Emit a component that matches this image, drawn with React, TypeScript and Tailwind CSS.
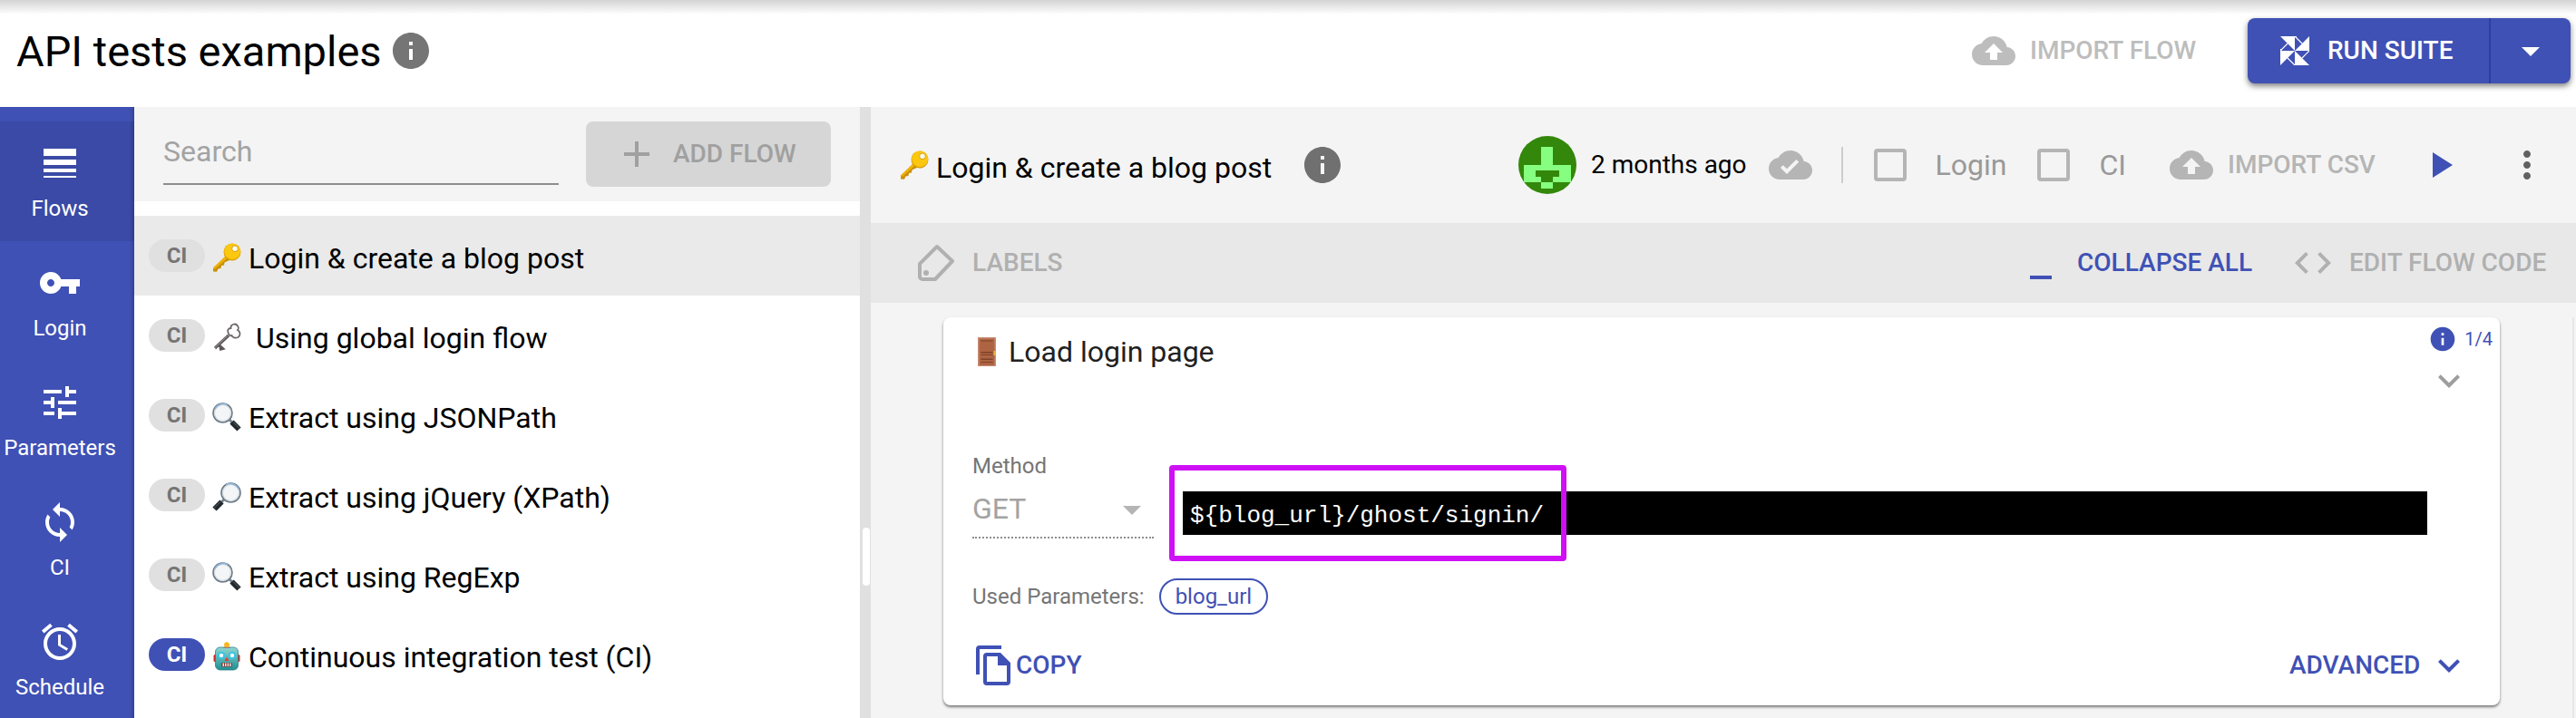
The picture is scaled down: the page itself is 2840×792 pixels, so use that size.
import type { ReactNode } from "react";

type IconProps = { d: string; className?: string };

function Icon({ d, className = "size-12" }: IconProps) {
  return (
    <svg viewBox="0 0 24 24" className={`shrink-0 fill-current ${className}`} aria-hidden="true">
      <path d={d} />
    </svg>
  );
}

const ICONS = {
  info: "M12 2C6.48 2 2 6.48 2 12s4.480 10 10 10 10-4.480 10-10S17.520 2 12 2zm1 15h-2v-6h2v6zm0-8h-2V7h2v2z",
  cloudUp: "M19.350 10.040C18.670 6.590 15.640 4 12 4 9.110 4 6.600 5.640 5.350 8.040 2.340 8.360 0 10.910 0 14c0 3.310 2.690 6 6 6h13c2.760 0 5-2.240 5-5 0-2.640-2.050-4.780-4.650-4.960zM14 13v4h-4v-4H7l5-5 5 5h-3z",
  cloudDone: "M19.350 10.040C18.670 6.590 15.640 4 12 4 9.110 4 6.600 5.640 5.350 8.040 2.340 8.360 0 10.910 0 14c0 3.310 2.690 6 6 6h13c2.760 0 5-2.240 5-5 0-2.640-2.050-4.780-4.650-4.960zM10 17l-3.500-3.500 1.410-1.410L10 14.170 15.180 9l1.410 1.410L10 17z",
  flows: "M3 17h18v-2H3v2zm0 3h18v-1H3v1zm0-7h18v-3H3v3zm0-9v4h18V4H3z",
  key: "M12.650 10C11.830 7.670 9.610 6 7 6c-3.310 0-6 2.690-6 6s2.690 6 6 6c2.610 0 4.830-1.670 5.650-4H17v4h4v-4h2v-4H12.650zM7 14c-1.100 0-2-.9-2-2s.9-2 2-2 2 .9 2 2-.9 2-2 2z",
  tune: "M3 17v2h6v-2H3zM3 5v2h10V5H3zm10 16v-2h8v-2h-8v-2h-2v6h2zM7 9v2H3v2h4v2h2V9H7zm14 4v-2H11v2h10zm-6-4h2V7h4V5h-4V3h-2v6z",
  sync: "M12 4V1L8 5l4 4V6c3.310 0 6 2.690 6 6 0 1.010-.25 1.970-.7 2.800l1.460 1.460C19.540 15.030 20 13.570 20 12c0-4.420-3.580-8-8-8zm0 14c-3.310 0-6-2.690-6-6 0-1.010.25-1.970.7-2.800L5.240 7.740C4.460 8.970 4 10.430 4 12c0 4.420 3.580 8 8 8v3l4-4-4-4v3z",
  alarm: "M22 5.720l-4.600-3.860-1.290 1.530 4.600 3.860L22 5.720zM7.880 3.390L6.600 1.860 2 5.710l1.290 1.530 4.590-3.850zM12.500 8H11v6l4.750 2.850.75-1.230-4-2.370V8zM12 4c-4.970 0-9 4.030-9 9s4.020 9 9 9c4.970 0 9-4.030 9-9s-4.030-9-9-9zm0 16c-3.870 0-7-3.130-7-7s3.130-7 7-7 7 3.130 7 7-3.130 7-7 7z",
  plus: "M19 13h-6v6h-2v-6H5v-2h6V5h2v6h6v2z",
  play: "M8 5v14l11-7z",
  more: "M12 8c1.100 0 2-.9 2-2s-.9-2-2-2-2 .9-2 2 .9 2 2 2zm0 2c-1.100 0-2 .9-2 2s.9 2 2 2 2-.9 2-2-.9-2-2-2zm0 6c-1.100 0-2 .9-2 2s.9 2 2 2 2-.9 2-2-.9-2-2-2z",
  code: "M9.400 16.600L4.800 12l4.600-4.600L8 6l-6 6 6 6 1.400-1.400zm5.200 0l4.600-4.600-4.600-4.600L16 6l6 6-6 6-1.400-1.400z",
  minimize: "M6 19h12v2H6z",
  down: "M7 10l5 5 5-5z",
  chevron: "M7.410 8.590L12 13.170l4.590-4.580L18 10l-6 6-6-6 1.410-1.410z",
};

function KeyEmoji({ silver = false }: { silver?: boolean }) {
  if (silver) {
    return (
      <svg viewBox="0 0 32 32" className="size-8 shrink-0" aria-hidden="true">
        <path d="M18 14 3 28M7.500 25l4 3.500-3.500 1" fill="none" stroke="#5c5557" strokeWidth="3.200" />
        <path d="M17 14.500 3 27.500" stroke="#a39d9f" strokeWidth="1" />
        <path d="M18 12c-2-4 0-6 2.500-6C20 1.500 26 0 28 3.500c1.500 2 .5 4 0 4.500 3 1.500 3.500 6 .5 8-3 1.600-6.500 0-7-2-1.500.7-2.700 0-3.500-2z" fill="none" stroke="#6f686b" strokeWidth="1.800" />
      </svg>
    );
  }
  return (
    <svg viewBox="0 0 32 32" className="size-8 shrink-0" aria-hidden="true">
      <path d="M17 13 1 27.500 1 31.500l4 .3 1.500-3.300 3-.5.500-3 3-.5.500-3L21 18z" fill="#c98f06" />
      <path d="M17 12 1 27.500l1.200 1.800L20 14z" fill="#eeb20c" />
      <circle cx="22" cy="10" r="9.500" fill="#d99e05" />
      <circle cx="22.200" cy="9.300" r="8.900" fill="#fcc80f" />
      <circle cx="25" cy="6.300" r="3.300" fill="#fffbea" stroke="#c98f06" strokeWidth=".8" />
    </svg>
  );
}

function LensEmoji({ right = false }: { right?: boolean }) {
  return (
    <svg viewBox="0 0 32 32" className={right ? "size-8 shrink-0 -scale-x-100" : "size-8 shrink-0"} aria-hidden="true">
      <path d="m19 19 4 4" stroke="#7d858c" strokeWidth="3" />
      <path d="m21.500 21.500 8 8" stroke="#22282c" strokeWidth="6" />
      <path d="m23 21.500 7 7" stroke="#5d666c" strokeWidth="1" />
      <circle cx="11.500" cy="11.500" r="10.500" fill="#f3f5f6" stroke="#6c7a86" strokeWidth="1.600" />
      <circle cx="11.500" cy="11.500" r="9" fill="none" stroke="#c9d3db" strokeWidth="1" />
      <path d="M3 7a10.300 10.300 0 0 1 14-4.300" fill="none" stroke="#8fb4d8" strokeWidth="1.600" />
    </svg>
  );
}

function RobotEmoji() {
  return (
    <svg viewBox="0 0 32 32" className="size-8 shrink-0" aria-hidden="true">
      <defs>
        <linearGradient id="robot" x1="0" y1="0" x2="0" y2="1">
          <stop offset="0" stopColor="#8fd6d3" />
          <stop offset="1" stopColor="#1f8f92" />
        </linearGradient>
      </defs>
      <rect x="1.500" y="14" width="29" height="8" rx="1.500" fill="#d5262b" />
      <rect x="3.500" y="6" width="25" height="25" rx="5" fill="url(#robot)" stroke="#2c7f80" strokeWidth=".8" />
      <path d="M12 6.500q4-3 8 0z" fill="#b9463a" />
      <circle cx="16" cy="3.200" r="2.900" fill="#f9b51b" />
      <circle cx="10" cy="15" r="4" fill="#35c5e6" />
      <circle cx="22" cy="15" r="4" fill="#35c5e6" />
      <circle cx="10" cy="15" r="2.200" fill="#fff" />
      <circle cx="22" cy="15" r="2.200" fill="#fff" />
      <path d="m16 16.500 2.300 4.500h-4.600z" fill="#e23b32" />
      <rect x="10" y="23" width="12" height="4.500" rx="1" fill="#7c3d38" />
      <path d="M12.200 23.500v3.500M14.800 23.500v3.500M17.400 23.500v3.500M20 23.500v3.500" stroke="#fff" strokeWidth="1.300" />
    </svg>
  );
}

function DoorEmoji() {
  return (
    <svg viewBox="0 0 32 32" className="size-8 shrink-0" aria-hidden="true">
      <path d="M6 0h20v32H6z" fill="#c98d76" />
      <path d="M7.500 1.500h17V31h-17z" fill="#ae6443" />
      <path d="M9.500 3.500h13v1h-13zM9.500 16h13v1.500h-13zM9.500 19h13v1h-13zM9.500 23.500h13V25h-13zM9.500 27h13v1h-13z" fill="#7e4229" />
      <rect x="23.500" y="15" width="2" height="5" fill="#e5bd3d" />
    </svg>
  );
}

const NAV = [
  { label: "Flows", icon: ICONS.flows, active: true },
  { label: "Login", icon: ICONS.key },
  { label: "Parameters", icon: ICONS.tune },
  { label: "CI", icon: ICONS.sync },
  { label: "Schedule", icon: ICONS.alarm },
];

const FLOWS: { name: string; emoji: ReactNode; selected?: boolean; ci?: boolean; wide?: boolean }[] = [
  { name: "Login & create a blog post", emoji: <KeyEmoji />, selected: true },
  { name: "Using global login flow", emoji: <KeyEmoji silver />, wide: true },
  { name: "Extract using JSONPath", emoji: <LensEmoji /> },
  { name: "Extract using jQuery (XPath)", emoji: <LensEmoji right /> },
  { name: "Extract using RegExp", emoji: <LensEmoji /> },
  { name: "Continuous integration test (CI)", emoji: <RobotEmoji />, ci: true },
];

function TopBar() {
  return (
    <header className="flex h-[118px] items-start justify-between bg-linear-to-b from-[#d4d4d4] to-white to-[16px] pr-1.5 pl-[18px]">
      <div className="flex h-28 items-center gap-2">
        <h1 className="text-[47px] leading-none">API tests examples</h1>
        <button type="button" aria-label="Suite details" className="text-[#757575]">
          <Icon d={ICONS.info} />
        </button>
      </div>
      <div className="flex h-28 items-center">
        <button type="button" className="mr-12 flex w-[256px] items-center gap-4 text-[28px] font-medium text-[#bdbdbd]">
          <Icon d={ICONS.cloudUp} />
          IMPORT FLOW
        </button>
        <div className="flex h-[72px] overflow-hidden rounded-lg bg-[#3f51b5] text-white shadow-[0_3px_6px_rgba(0,0,0,0.5)]">
          <button type="button" className="flex w-[268px] items-center gap-5 border-r-2 border-[#303f9f] pl-9 text-[28px] font-medium">
            <svg viewBox="0 0 32 32" className="size-8 shrink-0" aria-hidden="true">
              <path d="M0 0h16v16zM32 0v16H16zM32 32H16V16zM0 32V16h16z" fill="#fff" />
              <path d="M0 16 8 8M16 0l8 8M32 16l-8 8M16 32l-8-8M.5 16V14M18 .5h-2" fill="none" stroke="#fff" strokeWidth="1.200" />
            </svg>
            RUN SUITE
          </button>
          <button type="button" aria-label="Run options" className="flex w-[88px] items-center justify-center">
            <Icon d={ICONS.down} />
          </button>
        </div>
      </div>
    </header>
  );
}

function SideNav() {
  return (
    <nav className="w-[148px] shrink-0 bg-[#3f51b5] pt-4 text-white shadow-[inset_-4px_0_4px_-2px_rgba(0,0,0,0.2)]">
      {NAV.map((item) => (
        <a
          key={item.label}
          href={`#${item.label.toLowerCase()}`}
          className={`flex h-[132px] flex-col items-center gap-1.5 pt-[22px] pr-4 text-[24px] leading-[40px] ${item.active ? "bg-black/8" : ""}`}
        >
          <Icon d={item.icon} />
          <span>{item.label}</span>
        </a>
      ))}
    </nav>
  );
}

function FlowList() {
  return (
    <aside className="w-[800px] shrink-0 bg-white">
      <div className="flex h-[104px] items-center gap-[30px] bg-[#f4f4f4] px-8">
        <input
          type="text"
          aria-label="Search flows"
          placeholder="Search"
          className="h-[68px] min-w-0 flex-1 border-b-2 border-[#8e8e8e] bg-transparent pb-1 text-[32px] outline-none placeholder:text-[#a3a3a3]"
        />
        <button type="button" className="flex h-[72px] w-[270px] items-center gap-4 rounded-lg bg-[#d6d6d6] pl-8 text-[28px] font-medium text-[#a0a0a0]">
          <Icon d={ICONS.plus} />
          ADD FLOW
        </button>
      </div>
      <ul className="pt-4">
        {FLOWS.map((flow) => (
          <li key={flow.name} className={`flex h-[88px] items-center pl-4 ${flow.selected ? "bg-[#eaeaea]" : ""}`}>
            <span className={`flex h-9 w-[62px] items-center justify-center rounded-full text-[24px] font-bold ${flow.ci ? "bg-[#3f51b5] text-white" : "bg-[#e0e0e0] text-[#757575]"}`}>
              CI
            </span>
            <a href="#flow" className={`flex items-center pt-1 pl-2 text-[32px] leading-10 ${flow.wide ? "gap-4" : "gap-2"}`}>
              {flow.emoji}
              <span className="pt-0.5">{flow.name}</span>
            </a>
          </li>
        ))}
      </ul>
    </aside>
  );
}

function CheckField({ id, label }: { id: string; label: string }) {
  return (
    <div className="flex items-center gap-8">
      <input id={id} type="checkbox" className="size-9 appearance-none rounded-sm border-4 border-[#b5b5b5]" />
      <label htmlFor={id} className="text-[32px] text-[#999999]">
        {label}
      </label>
    </div>
  );
}

function FlowHeader() {
  return (
    <div className="flex h-32 items-center justify-between bg-[#f4f4f4] pr-[30px] pl-8">
      <div className="flex items-center">
        <KeyEmoji />
        <h2 className="pt-1.5 pl-2 text-[32px] leading-10">Login &amp; create a blog post</h2>
        <button type="button" aria-label="Flow details" className="ml-8 text-[#707070]">
          <Icon d={ICONS.info} />
        </button>
      </div>
      <div className="flex items-center">
        <svg viewBox="0 0 64 64" className="size-16 shrink-0" aria-hidden="true">
          <circle cx="32" cy="32" r="32" fill="#33870a" />
          <path d="M25 12h13v20h20v19H6V32h19z" fill="#86ff80" />
          <path d="M19 38h26v7h-7v6H25v-6h-6z" fill="#33870a" />
          <path d="M25 51h13v7H25z" fill="#86ff80" />
        </svg>
        <span className="pl-4 text-[28px]">2 months ago</span>
        <span className="ml-6 text-[#b5b5b5]">
          <Icon d={ICONS.cloudDone} />
        </span>
        <span className="mr-[34px] ml-8 h-10 w-0.5 bg-[#cccccc]" />
        <CheckField id="login-flow" label="Login" />
        <span className="w-[34px]" />
        <CheckField id="ci-flow" label="CI" />
        <button type="button" className="ml-12 flex w-[234px] items-center gap-4 text-[28px] font-medium text-[#b5b5b5]">
          <Icon d={ICONS.cloudUp} />
          IMPORT CSV
        </button>
        <button type="button" aria-label="Run flow" className="ml-10 text-[#3f51b5]">
          <Icon d={ICONS.play} />
        </button>
        <button type="button" aria-label="More actions" className="ml-12 text-[#616161]">
          <Icon d={ICONS.more} />
        </button>
      </div>
    </div>
  );
}

function FlowToolbar() {
  return (
    <div className="flex h-[88px] items-center justify-between bg-[#e8e8e8] pr-[22px] pl-12 text-[28px] font-medium text-[#b0b0b0]">
      <button type="button" className="flex items-center gap-4">
        <svg viewBox="0 0 48 48" className="size-12 shrink-0" fill="none" stroke="currentColor" strokeWidth="4" aria-hidden="true">
          <path d="M6 25 25 6 42 22 23 42H9a3 3 0 0 1-3-3z" strokeLinejoin="round" />
          <circle cx="13" cy="35" r="3" fill="currentColor" stroke="none" />
        </svg>
        LABELS
      </button>
      <div className="flex items-center gap-8">
        <button type="button" className="flex w-[268px] items-center gap-4 text-[#3f51b5]">
          <Icon d={ICONS.minimize} />
          COLLAPSE ALL
        </button>
        <button type="button" className="flex w-[292px] items-center gap-4">
          <Icon d={ICONS.code} />
          EDIT FLOW CODE
        </button>
      </div>
    </div>
  );
}

function StepCard() {
  return (
    <article className="relative mx-20 h-[428px] rounded-lg bg-white px-8 shadow-[0_2px_3px_rgba(0,0,0,0.5)]">
      <div className="flex h-[76px] items-center gap-2">
        <DoorEmoji />
        <h3 className="text-[32px] text-[#212121]">Load login page</h3>
      </div>
      <div className="absolute top-2 right-2 flex items-center gap-2 text-[20px] leading-7 text-[#3f51b5]">
        <Icon d={ICONS.info} className="size-8" />
        1/4
      </div>
      <button type="button" aria-label="Toggle step" className="absolute top-[46px] right-8 text-[#9e9e9e]">
        <Icon d={ICONS.chevron} />
      </button>
      <div className="mt-[68px] flex items-start gap-8 pr-12">
        <div className="w-[200px] shrink-0">
          <label htmlFor="method" className="block text-[24px] leading-10 text-[#757575]">
            Method
          </label>
          <div className="relative h-[60px] border-b-2 border-dotted border-[#8e8e8e] text-[#a3a3a3]">
            <select id="method" className="h-[54px] w-full appearance-none bg-transparent text-[32px] opacity-100">
              <option>GET</option>
            </select>
            <span className="pointer-events-none absolute top-1 right-0 text-[#b5b5b5]">
              <Icon d={ICONS.down} />
            </span>
          </div>
        </div>
        <div className="relative mt-12 flex-1">
          <input
            type="text"
            aria-label="Request URL"
            defaultValue="${blog_url}/ghost/signin/"
            className="block h-12 w-full bg-black px-2 pt-1.5 font-['Courier_New','Liberation_Mono',monospace] text-[26px] text-white outline-none"
          />
          <span className="pointer-events-none absolute -top-[29px] -left-[15px] h-[106px] w-[438px] rounded-sm border-6 border-[#cf10f5]" />
        </div>
      </div>
      <div className="mt-[44px] flex h-10 items-center gap-4 text-[24px] text-[#757575]">
        <span>Used Parameters:</span>
        <a href="#blog_url" className="flex h-10 items-center rounded-full border-2 border-[#3f51b5] px-4 text-[#3f51b5]">
          blog_url
        </a>
      </div>
      <div className="mt-8 flex h-12 items-center justify-between text-[28px] font-medium text-[#3f51b5]">
        <button type="button" className="flex items-center">
          <svg viewBox="0 0 48 48" className="size-12 shrink-0 fill-current" aria-hidden="true">
            <path d="M32 2H8a4 4 0 0 0-4 4v28h4V6h24zM31 10H16a4 4 0 0 0-4 4v28a4 4 0 0 0 4 4h22a4 4 0 0 0 4-4V21zM16 42V14h12v10h10v18z" />
          </svg>
          COPY
        </button>
        <button type="button" className="flex w-[200px] items-center justify-between">
          ADVANCED
          <Icon d={ICONS.chevron} />
        </button>
      </div>
    </article>
  );
}

export default function App() {
  return (
    <div className="flex min-h-screen flex-col overflow-hidden bg-white font-[Roboto,sans-serif] text-black">
      <TopBar />
      <div className="flex flex-1">
        <SideNav />
        <FlowList />
        <div className="flex w-3 shrink-0 items-start justify-end bg-[#e0e0e0] pt-[464px]">
          <span className="mr-px h-16 w-2 rounded-full bg-white" />
        </div>
        <main className="flex min-w-0 flex-1 flex-col bg-[#f4f4f4]">
          <FlowHeader />
          <FlowToolbar />
          <div className="mt-4 mr-0.5 flex-1 border-r-2 border-[#e6e6e6]">
            <StepCard />
          </div>
        </main>
      </div>
    </div>
  );
}
